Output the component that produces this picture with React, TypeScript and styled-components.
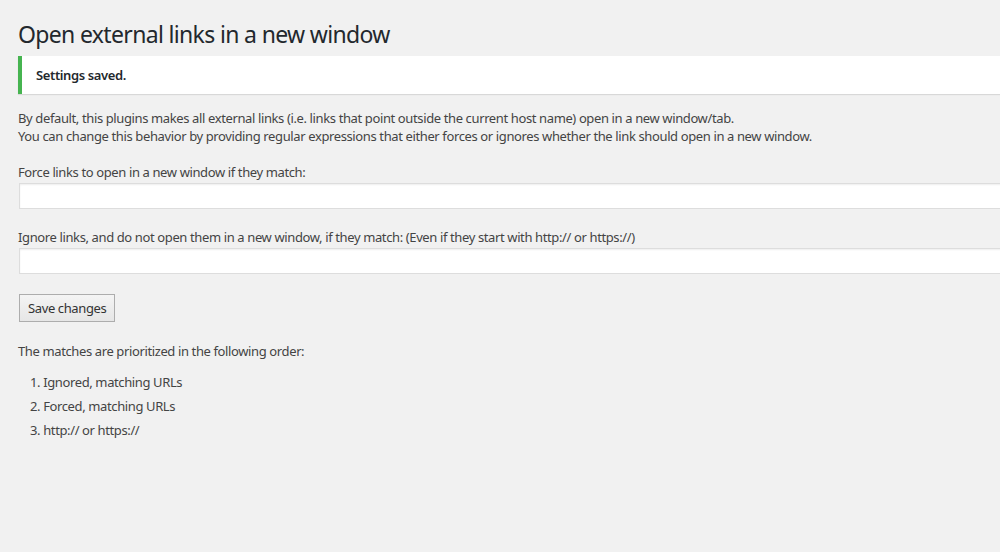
import React from "react";
import styled, { createGlobalStyle } from "styled-components";

const Global = createGlobalStyle`
  html, body { margin: 0; padding: 0; overflow: hidden; }
  body {
    background: #f1f1f1;
    font-family: "Noto Sans", "Open Sans", sans-serif;
    font-size: 13px;
    letter-spacing: -0.38px;
    color: #444;
  }
`;

const Page = styled.div`
  width: 1040px;
  padding: 18px 0 0 18px;
  box-sizing: border-box;
`;

const Title = styled.h1`
  margin: 0;
  font-size: 23px;
  font-weight: 400;
  letter-spacing: -0.66px;
  line-height: 32px;
  color: #23282d;
`;

const Notice = styled.div`
  margin-top: 6px;
  height: 38px;
  display: flex;
  align-items: center;
  padding-left: 14px;
  background: #fff;
  border-left: 4px solid #46b450;
  box-shadow: 0 1px 1px rgba(0, 0, 0, 0.1);
  font-weight: 600;
  color: #23282d;
`;

const Text = styled.p<{ $top: number }>`
  margin: ${(p) => p.$top}px 0 0;
  line-height: 18px;
`;

const Field = styled.label<{ $top: number }>`
  display: flex;
  flex-direction: column;
  gap: 2px;
  margin-top: ${(p) => p.$top}px;
  line-height: 18px;
`;

const Input = styled.input`
  margin: 0 0 0 1px;
  height: 26px;
  box-sizing: border-box;
  background: #fff;
  border: 1px solid #ddd;
  box-shadow: inset 0 1px 2px rgba(0, 0, 0, 0.07);
  font: inherit;
`;

const Button = styled.button`
  margin: 20px 0 0 1px;
  height: 28px;
  padding: 0 8px;
  font: inherit;
  font-size: 13px;
  letter-spacing: -0.38px;
  color: #333;
  border: 1px solid #adadad;
  border-radius: 0;
  background: linear-gradient(#f4f4f4, #e6e6e6);
  cursor: pointer;
`;

const List = styled.ol`
  margin: 10px 0 0;
  padding-left: 12px;
  list-style: none;
  counter-reset: item;
  li {
    line-height: 24px;
    counter-increment: item;
  }
  li::before { content: counter(item) ". "; }
`;

export default function App() {
  return (
    <>
      <Global />
      <Page>
        <Title>Open external links in a new window</Title>
        <Notice>Settings saved.</Notice>
        <Text $top={15}>
          By default, this plugins makes all external links (i.e. links that point outside the current host name) open in a new window/tab.
          <br />
          You can change this behavior by providing regular expressions that either forces or ignores whether the link should open in a new window.
        </Text>
        <Field $top={18}>
          Force links to open in a new window if they match:
          <Input type="text" />
        </Field>
        <Field $top={19}>
          Ignore links, and do not open them in a new window, if they match: (Even if they start with http:// or https://)
          <Input type="text" />
        </Field>
        <div>
          <Button type="button">Save changes</Button>
        </div>
        <Text $top={20}>The matches are prioritized in the following order:</Text>
        <List>
          <li>Ignored, matching URLs</li>
          <li>Forced, matching URLs</li>
          <li>http:// or https://</li>
        </List>
      </Page>
    </>
  );
}
